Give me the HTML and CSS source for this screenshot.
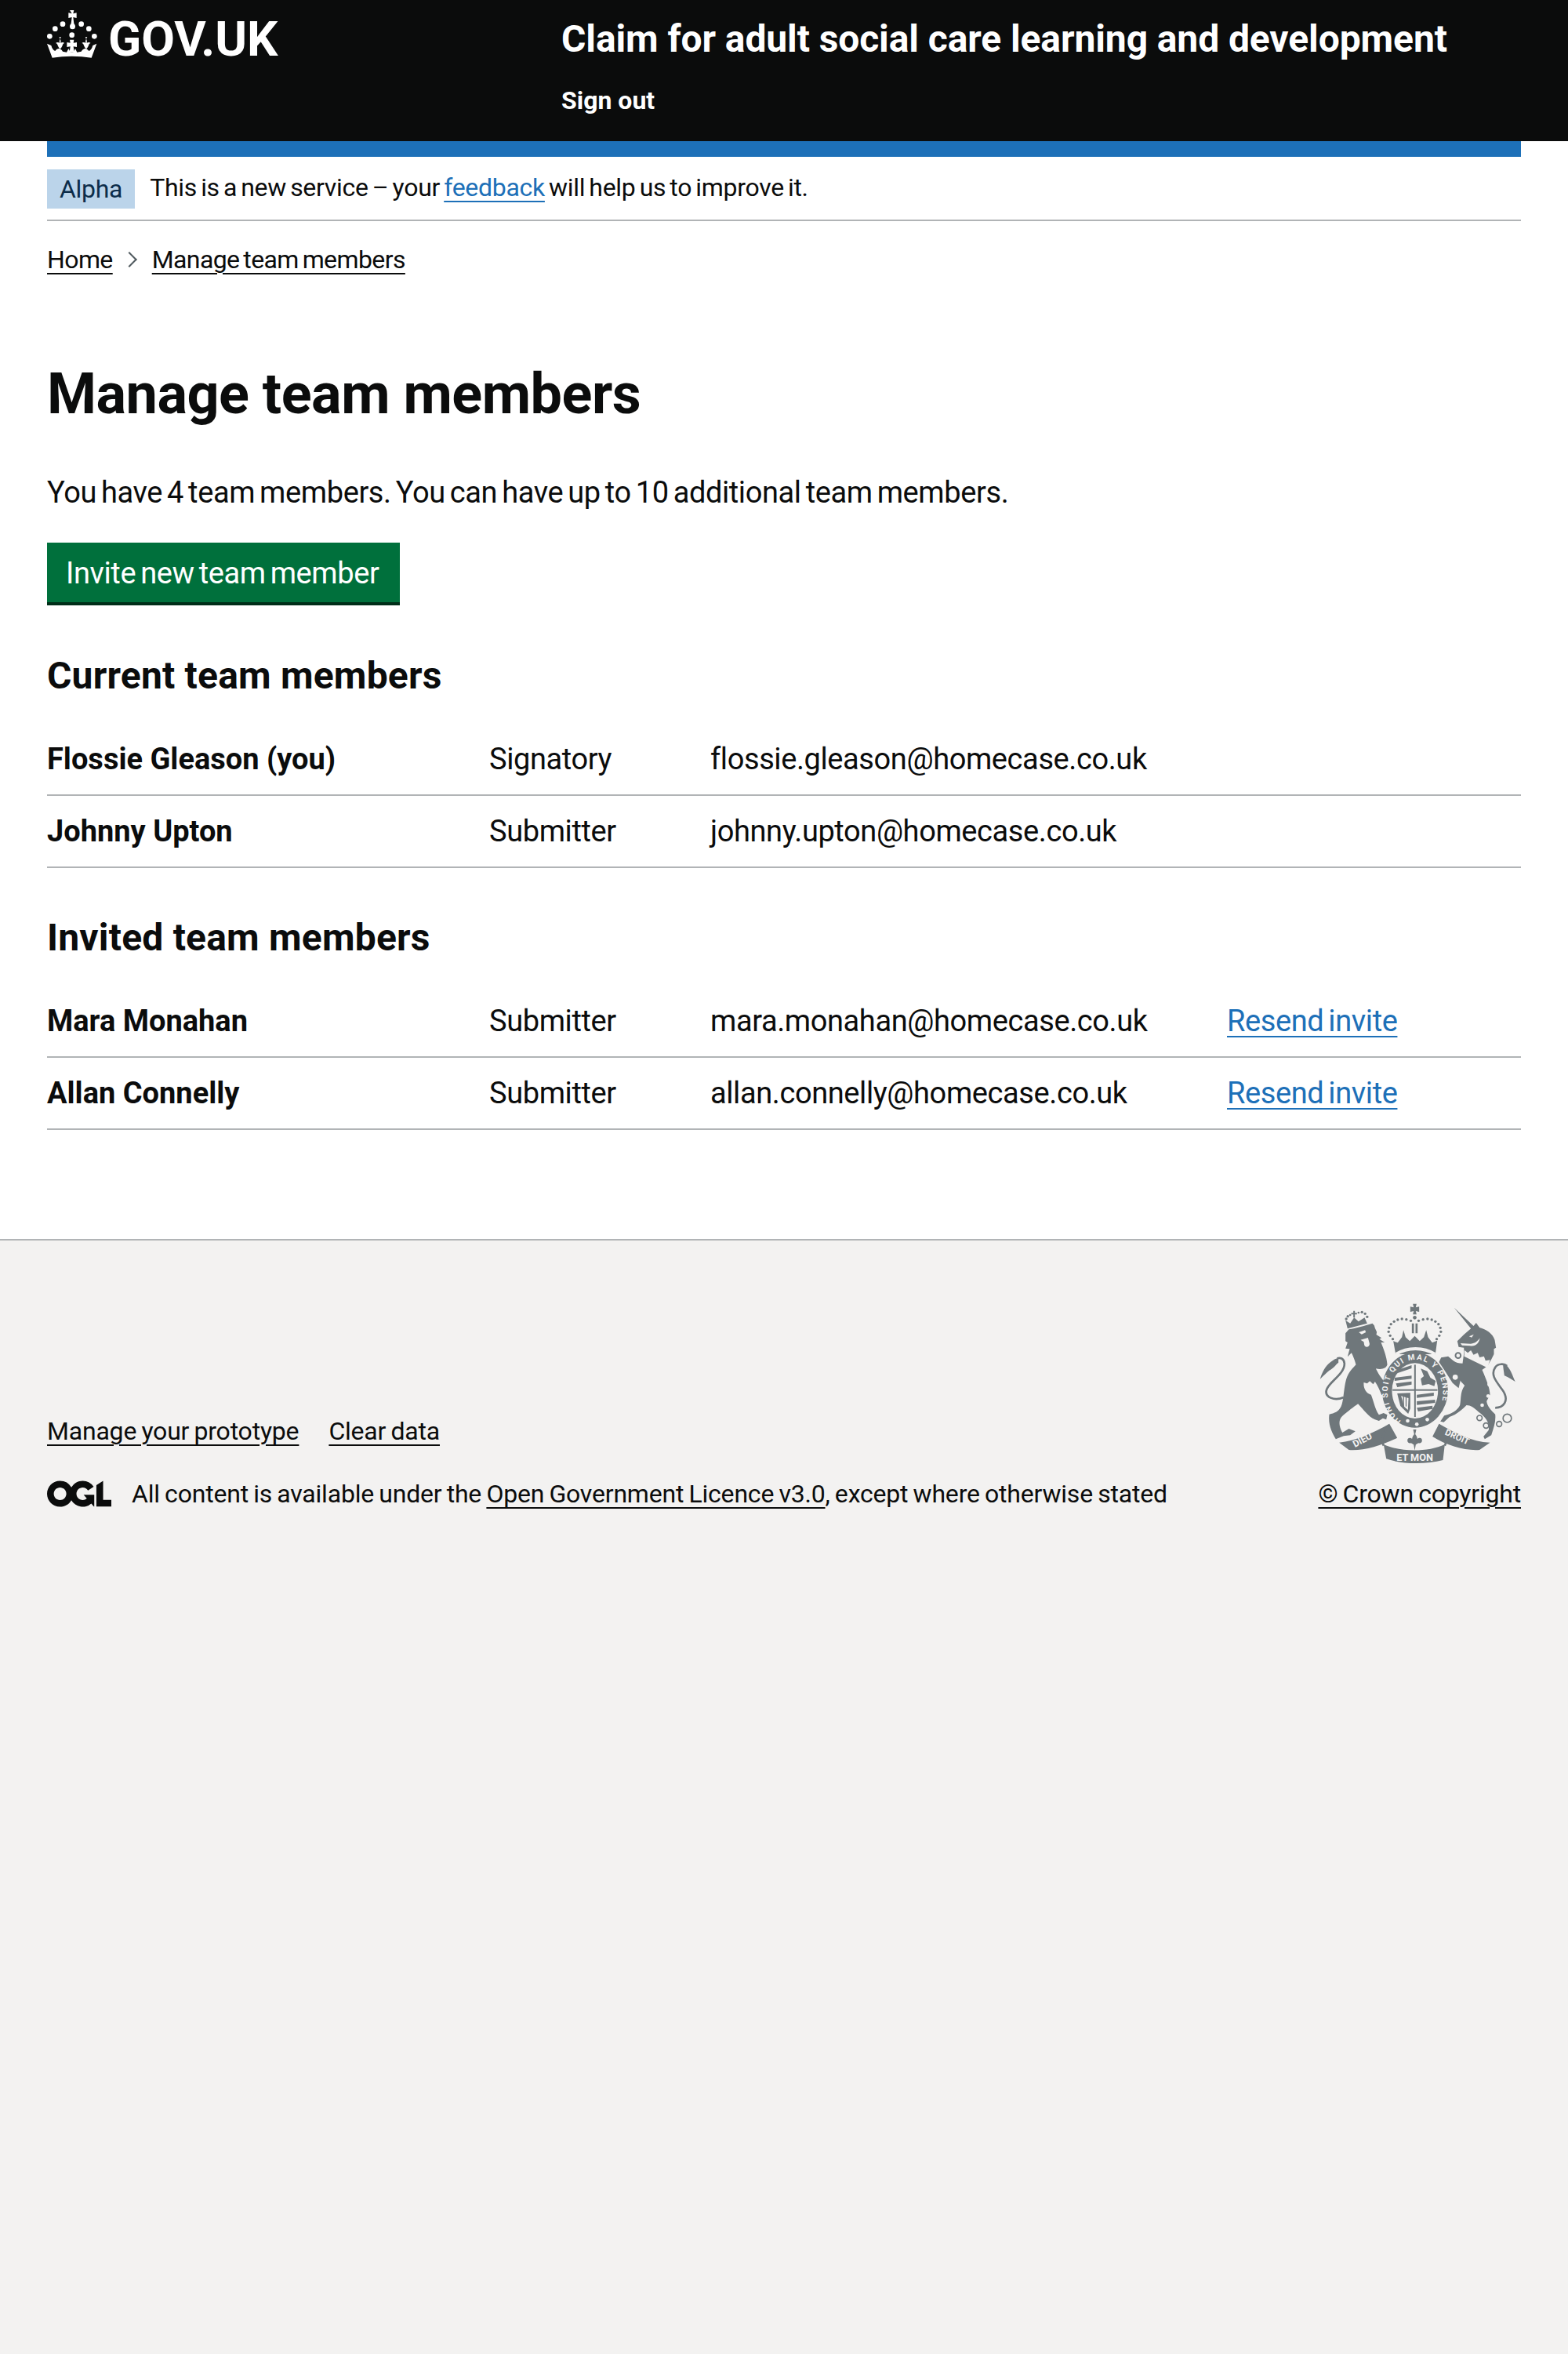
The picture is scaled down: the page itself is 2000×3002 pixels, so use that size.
FILE: index.html
```html
<!DOCTYPE html>
<html lang="en">
<head>
	<meta charset="UTF-8">
	<title>Manage team members</title>
	<link rel="stylesheet" href="styles.css">
</head>
<body>
	<header class="header">
		<div class="logo">
			<svg class="crown" viewBox="30 25 192 183" aria-hidden="true">
				<g fill="currentColor">
					<circle cx="40" cy="125" r="10"/><circle cx="61" cy="96" r="10"/><circle cx="90" cy="78" r="10"/>
					<circle cx="161" cy="78" r="10"/><circle cx="190" cy="96" r="10"/><circle cx="211" cy="125" r="10"/>
					<circle cx="125" cy="120" r="10"/>
					<path d="M117 25h16l-3 13 13-3v20l-13-3 3 24c3 4 5 7 5 11a10 10 0 0 1-21 0c0-4 2-7 5-11l3-24-13 3V35l13 3z"/>
					<path d="M50 207C100 199 150 199 200 207L220 153 205 160C202 172 196 180 190 181 186 175 180 172 176 172 171 172 165 176 161 183L145 186 138 172 130 186H120L112 172 105 186 90 183C86 176 80 172 75 172 70 172 65 175 61 181 55 180 49 172 46 160L30 153Z"/>
					<path d="M76 128c5 8 8 14 6 22 5-3 11-3 15 1-3 0-7 3-8 9-2 6-5 9-9 14-4-5-7-8-9-14-1-6-5-9-8-9 4-4 10-4 15-1-2-8 1-14 6-22zM176 128c5 8 8 14 6 22 5-3 11-3 15 1-3 0-7 3-8 9-2 6-5 9-9 14-4-5-7-8-9-14-1-6-5-9-8-9 4-4 10-4 15-1-2-8 1-14 6-22z"/>
					<path d="M117 138h16l-2 12 13-2v18l-13-2 3 22h-18l3-22-13 2v-18l13 2z"/>
				</g>
			</svg>
			<span class="logo-text">GOV.UK</span>
		</div>
		<div class="service">
			<div class="service-name">Claim for adult social care learning and development</div>
			<a class="sign-out" href="#">Sign out</a>
		</div>
	</header>

	<div class="width">
		<div class="phase">
			<strong class="tag">Alpha</strong>
			<span class="phase-text">This is a new service – your <a class="link" href="#">feedback</a> will help us to improve it.</span>
		</div>
		<ol class="crumbs">
			<li><a href="#">Home</a></li>
			<li class="chev"></li>
			<li><a href="#">Manage team members</a></li>
		</ol>

		<main class="main">
			<h1>Manage team members</h1>
			<p class="intro">You have 4 team members. You can have up to 10 additional team members.</p>
			<a class="button" href="#">Invite new team member</a>

			<h2>Current team members</h2>
			<div class="row">
				<div class="name">Flossie Gleason (you)</div>
				<div class="role">Signatory</div>
				<div class="email">flossie.gleason@homecase.co.uk</div>
			</div>
			<div class="row">
				<div class="name">Johnny Upton</div>
				<div class="role">Submitter</div>
				<div class="email">johnny.upton@homecase.co.uk</div>
			</div>

			<h2 class="second">Invited team members</h2>
			<div class="row">
				<div class="name">Mara Monahan</div>
				<div class="role">Submitter</div>
				<div class="email">mara.monahan@homecase.co.uk</div>
				<a class="link" href="#">Resend invite</a>
			</div>
			<div class="row">
				<div class="name">Allan Connelly</div>
				<div class="role">Submitter</div>
				<div class="email">allan.connelly@homecase.co.uk</div>
				<a class="link" href="#">Resend invite</a>
			</div>
		</main>
	</div>

	<footer class="footer">
		<div class="footer-in">
			<div class="footer-left">
				<ul class="footer-links">
					<li><a href="#">Manage your prototype</a></li>
					<li><a href="#">Clear data</a></li>
				</ul>
				<div class="licence">
					<svg class="ogl" viewBox="0 0 483.2 195.7" aria-hidden="true"><path fill="currentColor" d="M421.5 142.8V.1l-50.7 32.3v161.1h112.4v-50.7zm-122.3-9.6A47.12 47.12 0 0 1 221 97.8c0-26 21.1-47.1 47.1-47.1 16.7 0 31.4 8.7 39.7 21.8l42.7-27.2A97.63 97.63 0 0 0 268.1 0c-36.5 0-68.3 20.1-85.1 49.7A98 98 0 0 0 97.8 0C43.9 0 0 43.9 0 97.8s43.9 97.8 97.8 97.8c36.5 0 68.3-20.1 85.1-49.7a97.76 97.76 0 0 0 149.6 25.4l19.4 22.2h3v-87.8h-80l24.3 27.5zM97.8 145c-26 0-47.1-21.1-47.1-47.1s21.1-47.1 47.1-47.1 47.2 21 47.2 47S123.8 145 97.8 145"/></svg>
					<span>All content is available under the <a href="#">Open Government Licence v3.0</a>, except where otherwise stated</span>
				</div>
			</div>
			<div class="footer-right">
				<svg class="crest" viewBox="130 95 755 615" aria-hidden="true">
					<defs>
						<path id="garter" d="M445 545A106 126 0 1 1 560 540"/>
					</defs>
					<g fill="#6f777b">
						<!-- lion -->
						<path d="M232 210L245 195C270 190 310 180 335 172L342 180 345 190 352 205 350 215 370 228 362 232 382 245 368 245C378 270 390 300 392 330 388 345 370 350 348 345 360 370 378 395 395 408L402 440 385 455 370 445C362 425 355 410 345 395L338 405 325 393 315 402 302 398C300 420 310 440 330 445 340 470 345 500 360 522L378 515 392 522 388 540 375 535 360 545 345 540C320 530 300 500 280 480 265 490 240 510 222 525 205 540 205 560 220 590L245 575 270 585 250 600 225 603 195 615C180 590 165 560 170 520 190 515 205 510 215 490 225 470 225 420 235 385 245 355 260 345 272 330 265 305 260 295 255 285L240 300 248 270 232 268 240 245 232 240Z"/>
						<path d="M135 385C142 360 155 335 175 320 185 312 195 306 205 305L205 322C195 330 185 345 170 352 160 360 148 372 135 385Z"/>
						<path d="M240 192L232 160 250 172 265 150 282 165 305 150 315 172Z"/>
						<path d="M262 124h6v8h8v6h-8v12h-6v-12h-8v-6h8z"/>
						<circle cx="235" cy="155" r="5"/><circle cx="241" cy="145" r="5"/><circle cx="250" cy="140" r="4"/><circle cx="282" cy="131" r="4"/><circle cx="295" cy="129" r="5"/><circle cx="307" cy="135" r="5"/><circle cx="315" cy="147" r="5"/>
						<!-- big crown -->
						<path d="M490 97h14l-3 14 13-3v20l-13-3 3 13h-14l3-13-13 3v-20l13 3z"/>
						<circle cx="497" cy="150" r="7"/>
						<path d="M415 240L432 246 448 225 454 198 462 225 478 240 497 220 516 240 532 225 541 198 548 225 564 246 583 238 576 290H424Z"/>
						<path d="M486 172h8v38h-8zM500 172h8v38h-8z"/>
						<circle cx="482" cy="162" r="5"/><circle cx="465" cy="157" r="5"/><circle cx="448" cy="155" r="5"/><circle cx="432" cy="158" r="5"/><circle cx="418" cy="165" r="5"/><circle cx="406" cy="175" r="5"/><circle cx="399" cy="189" r="5"/><circle cx="397" cy="204" r="5"/><circle cx="403" cy="219" r="5"/><circle cx="413" cy="232" r="5"/>
						<circle cx="512" cy="162" r="5"/><circle cx="529" cy="157" r="5"/><circle cx="546" cy="155" r="5"/><circle cx="562" cy="158" r="5"/><circle cx="576" cy="165" r="5"/><circle cx="588" cy="175" r="5"/><circle cx="595" cy="189" r="5"/><circle cx="597" cy="204" r="5"/><circle cx="591" cy="219" r="5"/><circle cx="581" cy="232" r="5"/>
					</g>
					<path d="M425 290C470 262 530 262 575 290" fill="none" stroke="#f3f2f1" stroke-width="12"/>
					<g fill="#6f777b">
						<!-- shield ring -->
						<ellipse cx="498" cy="427" rx="126" ry="144"/>
						<!-- unicorn -->
						<path d="M648 112L722 182 732 170 745 188C770 195 795 210 803 235L808 265 800 270 800 290 790 310 775 335 755 350C770 385 785 420 785 445L772 470C775 490 790 505 805 520 808 545 800 570 790 600L765 615 760 605 780 580C782 555 775 535 740 510 725 495 710 485 695 485 680 500 660 520 630 530L608 550 595 547 610 525C640 518 660 505 670 485 675 460 670 435 688 410 680 400 672 395 672 390L665 420 642 400 610 350 590 320 598 303 625 298C640 310 650 325 680 325L686 280 685 265 665 262 660 240 685 215 712 192Z"/>
						<path d="M835 328C860 330 870 370 882 395 865 385 850 375 840 372 838 355 835 340 835 328Z"/>
						<!-- ribbons -->
						<path d="M208 628C270 622 340 590 400 556L430 610C370 640 300 660 245 656Z"/>
						<path d="M785 628C715 625 650 590 590 556L565 605C620 640 690 660 745 656Z"/>
						<path d="M378 635C440 665 550 665 612 635L605 695C540 712 450 712 388 690Z"/>
						<!-- fleur -->
						<path d="M491 578h12l-4 18c6 8 8 14 8 18 6-6 18-6 18 6 0 8-6 12-14 10l-10 6-4 22-4-22-10-6c-8 2-14-2-14-10 0-12 12-12 18-6 0-4 2-10 8-18z"/>
					</g>
					<g fill="none" stroke="#6f777b" stroke-width="8">
						<path d="M225 455C190 470 150 455 160 425 170 395 230 365 228 325 226 305 212 302 200 306"/>
						<path d="M805 495C835 495 860 470 835 430 810 395 785 370 805 340 815 325 840 325 850 335"/>
						<path d="M400 560C375 590 365 615 378 640"/>
						<path d="M590 560C615 590 625 615 612 640"/>
						<circle cx="663" cy="295" r="10" stroke-width="6"/>
						<circle cx="745" cy="534" r="10" stroke-width="5"/>
						<circle cx="770" cy="563" r="10" stroke-width="5"/>
						<circle cx="820" cy="557" r="10" stroke-width="5"/>
						<circle cx="851" cy="535" r="16" stroke-width="5"/>
					</g>
					<g fill="#f3f2f1">
						<!-- shield inner -->
						<ellipse cx="498" cy="430" rx="88" ry="106"/>
						<!-- face, collar and spots -->
						<path d="M283 206l24-8 3 8-16 8zM290 235l28-8 6 22c2 12-14 20-20 6l-2-12z"/>
						<path d="M688 275L700 285 712 275 722 292 738 285 745 302 762 298 768 315 785 312 775 342 686 298Z"/>
						<path d="M705 222l18-8-8 12zM672 248l38 2c14 0 28-8 36-22-2 20-16 34-38 30l-30-2z"/>
						<circle cx="652" cy="378" r="10"/><circle cx="785" cy="405" r="10"/><circle cx="778" cy="450" r="7"/><circle cx="755" cy="485" r="7"/>
						<circle cx="470" cy="545" r="7"/><circle cx="505" cy="558" r="7"/><circle cx="545" cy="540" r="7"/>
					</g>
					<g fill="#6f777b">
						<!-- quarters -->
						<rect x="495" y="330" width="6" height="200"/>
						<rect x="412" y="424" width="172" height="6"/>
						<path d="M425 352l60-20v12l-60 20zM420 380l65-8v12l-65 8zM425 402l60-8v12l-55 10z"/>
						<path d="M520 345l25 10 12 25 20 12-5 20-22-8-25 5-5-25 12-10z"/>
						<path d="M430 440l50-2v60l-8 20-30-30zM505 445l65-8v12l-65 8zM505 470l70-6v12l-70 8zM505 495l60-8v12l-55 10z"/>
						<path d="M445 450l28 8-2 45-14-12z" fill="#f3f2f1"/>
						<rect x="452" y="450" width="4" height="38"/><rect x="462" y="455" width="4" height="35"/>
					</g>
					<g class="crest-text">
						<text font-size="30"><textPath href="#garter" textLength="520">HONI SOIT QUI MAL Y PENSE</textPath></text>
						<text font-size="38" x="497" y="697" text-anchor="middle">ET MON</text>
						<text font-size="36" transform="translate(268 647) rotate(-28)">DIEU</text>
						<text font-size="34" transform="translate(610 597) rotate(24)">DROIT</text>
					</g>
				</svg>
				<a href="#">© Crown copyright</a>
			</div>
		</div>
	</footer>
</body>
</html>
```

FILE: styles.css
```css
*{
	margin: 0;
	padding: 0;
	box-sizing: border-box;
	list-style: none;
}
html,body{
	height: 100%;
}
body{
	display: flex;
	flex-direction: column;
	font-family: Roboto, "Noto Sans", sans-serif;
	font-size: 38px;
	line-height: 50px;
	letter-spacing: -0.4px;
	word-spacing: -3px;
	color: #0b0c0c;
	background: #fff;
}
a{
	color: inherit;
	text-underline-offset: 6px;
	text-decoration-thickness: 2px;
}
.link{
	color: #1d70b8;
}

.header{
	height: 180px;
	background: #0b0c0c;
	color: #fff;
	padding: 0 60px;
	display: flex;
	letter-spacing: 0;
	word-spacing: 0;
}
.logo{
	width: 656px;
	display: flex;
	padding-top: 13px;
	height: 90px;
}
.crown{
	width: 64px;
	height: 61px;
}
.logo-text{
	font-weight: 700;
	font-size: 62px;
	line-height: 74px;
	margin-left: 14px;
}
.service{
	padding-top: 22px;
}
.service-name{
	font-size: 48px;
	line-height: 56px;
	font-weight: 700;
	letter-spacing: -0.1px;
}
.sign-out{
	display: block;
	margin-top: 30px;
	font-size: 32px;
	line-height: 40px;
	font-weight: 700;
	text-decoration: none;
}

.width{
	margin: 0 60px;
}
.phase{
	border-top: 20px solid #1d70b8;
	border-bottom: 2px solid #b1b4b6;
	padding: 16px 0 14px;
	display: flex;
	align-items: center;
	gap: 19px;
	font-size: 32px;
	line-height: 46px;
	letter-spacing: -0.3px;
	word-spacing: -2.5px;
}
.phase-text{
	padding-bottom: 4px;
}
.tag{
	background: #bbd4ea;
	color: #0c2d4a;
	font-weight: 400;
	padding: 2px 16px;
}
.crumbs{
	display: flex;
	align-items: center;
	margin-top: 29px;
	font-size: 32px;
	line-height: 40px;
	letter-spacing: -0.6px;
	word-spacing: -2.5px;
}
.chev{
	width: 14px;
	height: 14px;
	margin: 0 22px 0 14px;
	border-top: 2px solid #505a5f;
	border-right: 2px solid #505a5f;
	transform: rotate(45deg);
}

.main{
	padding: 112px 0 139px;
}
h1{
	font-size: 72px;
	line-height: 80px;
	margin-bottom: 60px;
	letter-spacing: -0.5px;
	word-spacing: 0;
}
.intro{
	margin-bottom: 39px;
}
.button{
	display: block;
	width: 450px;
	white-space: nowrap;
	background: #00703c;
	color: #fff;
	padding: 14px 24px 12px;
	border-bottom: 4px solid #002d18;
	text-decoration: none;
}
h2{
	font-size: 48px;
	line-height: 60px;
	margin: 60px 0 31px;
	letter-spacing: 0.2px;
	word-spacing: 0;
}
h2.second{
	margin-top: 59px;
}
.row{
	display: flex;
	padding: 20px 0;
	border-bottom: 2px solid #b1b4b6;
}
.name{
	width: 564px;
	font-weight: 700;
	letter-spacing: 0;
	word-spacing: 0;
}
.role{
	width: 282px;
}
.email{
	width: 659px;
}

.footer{
	flex: 1;
	background: #f3f2f1;
	border-top: 2px solid #b1b4b6;
	padding: 0 60px;
	font-size: 32px;
	line-height: 40px;
	letter-spacing: -0.2px;
	word-spacing: -1.5px;
}
.footer-in{
	display: flex;
	justify-content: space-between;
	align-items: flex-end;
	padding-top: 80px;
}
.footer-links{
	display: flex;
	gap: 38px;
	margin-bottom: 40px;
}
.licence{
	display: flex;
	align-items: center;
	gap: 26px;
}
.ogl{
	width: 82px;
	height: 34px;
}
.footer-right{
	display: flex;
	flex-direction: column;
	align-items: flex-end;
}
.crest{
	width: 252px;
	height: 205px;
	margin-bottom: 18px;
	margin-right: 6px;
}
.crest-text{
	fill: #f3f2f1;
	font-weight: 700;
	letter-spacing: 0;
	word-spacing: 0;
}
```
